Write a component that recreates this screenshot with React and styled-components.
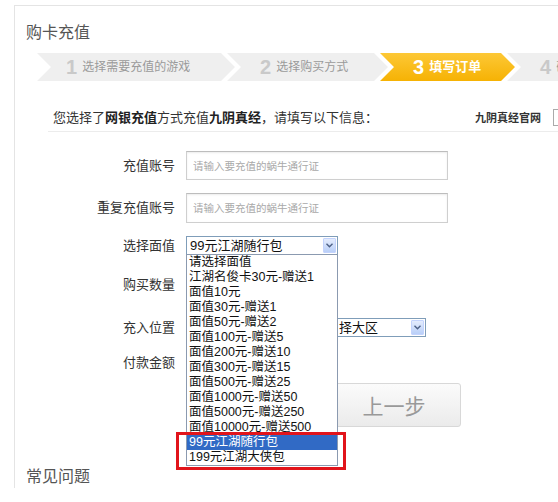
import React from "react";
import styled, { createGlobalStyle } from "styled-components";

const GlobalStyle = createGlobalStyle`
  html, body {
    margin: 0;
    padding: 0;
    background: #fff;
    overflow: hidden;
  }
  body {
    font-family: "Liberation Sans", "Noto Sans CJK SC", sans-serif;
    color: #333;
  }
`;

const steps = [
    { num: 1, text: "选择需要充值的游戏", w: 198 },
    { num: 2, text: "选择购买方式", w: 161 },
    { num: 3, text: "填写订单", w: 135, active: true },
    { num: 4, text: "确认支付", w: 120 },
];

const faceValues = [
    "请选择面值",
    "江湖名俊卡30元-赠送1",
    "面值10元",
    "面值30元-赠送1",
    "面值50元-赠送2",
    "面值100元-赠送5",
    "面值200元-赠送10",
    "面值300元-赠送15",
    "面值500元-赠送25",
    "面值1000元-赠送50",
    "面值5000元-赠送250",
    "面值10000元-赠送500",
    "99元江湖随行包",
    "199元江湖大侠包",
];

const selectedIndex = 12;

const ArrowIcon = () => (
    <svg width="7" height="5" viewBox="0 0 7 5">
        <path d="M0.5 0.8 L3.5 3.8 L6.5 0.8" fill="none" stroke="#4d6185" strokeWidth="1.4" />
    </svg>
);

const App = () => {
    return (
        <Page>
            <GlobalStyle />
            <Card>
                <Title>购卡充值</Title>

                <StepBar>
                    {steps.map((step, index) => (
                        <Step key={step.num} $w={step.w} $active={step.active} $first={index === 0}>
                            <StepNum $active={step.active}>{step.num}</StepNum>
                            <StepText $active={step.active}>{step.text}</StepText>
                        </Step>
                    ))}
                </StepBar>

                <InfoBar>
                    <InfoLead>
                        您选择了<b>网银充值</b>方式充值<b>九阴真经</b>，请填写以下信息：
                    </InfoLead>
                    <SiteName>九阴真经官网</SiteName>
                    <SiteBox />
                </InfoBar>

                <Row $mt={19} $h={29}>
                    <Label>充值账号</Label>
                    <TextInput placeholder="请输入要充值的蜗牛通行证" />
                </Row>
                <Row $mt={13} $h={30}>
                    <Label>重复充值账号</Label>
                    <TextInput placeholder="请输入要充值的蜗牛通行证" />
                </Row>
                <Row $mt={13} $h={19}>
                    <Label>选择面值</Label>
                    <SelectBox $w={152}>
                        <SelectText>99元江湖随行包</SelectText>
                        <ArrowBtn><ArrowIcon /></ArrowBtn>
                        <OptionList>
                            {faceValues.map((item, index) => (
                                <OptionItem key={item} $selected={index === selectedIndex}>{item}</OptionItem>
                            ))}
                            <Highlight />
                        </OptionList>
                    </SelectBox>
                </Row>
                <Row $mt={20} $h={20}>
                    <Label>购买数量</Label>
                </Row>
                <Row $mt={23} $h={19}>
                    <Label>充入位置</Label>
                    <SelectGroup>
                        {/* first select sits fully under the open list */}
                        <SelectBox $w={118}>
                            <SelectText />
                            <ArrowBtn><ArrowIcon /></ArrowBtn>
                        </SelectBox>
                        <SelectBox $w={117}>
                            <SelectText $indent={26}>择大区</SelectText>
                            <ArrowBtn><ArrowIcon /></ArrowBtn>
                        </SelectBox>
                    </SelectGroup>
                </Row>
                <Row $mt={16} $h={20}>
                    <Label>付款金额</Label>
                </Row>
                <ButtonRow>
                    <PrevButton type="button">上一步</PrevButton>
                </ButtonRow>

                <SubTitle>常见问题</SubTitle>
            </Card>
        </Page>
    );
};

const Page = styled.div`
width: 558px;
height: 502px;
overflow: hidden;
`;

const Card = styled.div`
box-sizing: border-box;
margin: 5px 0 0 14px;
width: 620px;
height: 483px;
padding-left: 11px;
border-top: 1px solid #e4e4e4;
border-left: 1px solid #e4e4e4;
`;

const Title = styled.h2`
margin: 17px 0 0;
font-size: 16px;
line-height: 20px;
font-weight: normal;
color: #555;
`;

const StepBar = styled.div`
display: flex;
margin: 10px 0 0 11px;
height: 28px;
white-space: nowrap;
`;

const Step = styled.div`
box-sizing: border-box;
flex: none;
display: flex;
align-items: center;
gap: 5px;
width: ${(p) => p.$w}px;
height: 28px;
margin-left: ${(p) => (p.$first ? 0 : -8)}px;
padding-left: ${(p) => (p.$first ? 29 : 33)}px;
background: ${(p) => (p.$active ? "linear-gradient(#fdc836, #f6b204)" : "#efefef")};
clip-path: polygon(0 0, calc(100% - 14px) 0, 100% 50%, calc(100% - 14px) 100%, 0 100%, 14px 50%);
`;

const StepNum = styled.span`
font-size: 20px;
line-height: 28px;
font-weight: bold;
color: ${(p) => (p.$active ? "#fff" : "#c9c9c9")};
`;

const StepText = styled.span`
font-size: ${(p) => (p.$active ? 13 : 12)}px;
line-height: 28px;
font-weight: ${(p) => (p.$active ? "bold" : "normal")};
color: ${(p) => (p.$active ? "#fff" : "#9a9a9a")};
`;

const InfoBar = styled.div`
display: flex;
align-items: flex-start;
height: 23px;
margin: 27px 0 0 22px;
padding-left: 5px;
border-bottom: 1px solid #ececec;
font-size: 13px;
line-height: 20px;
white-space: nowrap;
b {
    color: #222;
}
`;

const InfoLead = styled.div`
flex: 0 0 422px;
color: #333;
`;

const SiteName = styled.div`
font-size: 11px;
font-weight: bold;
color: #333;
`;

const SiteBox = styled.div`
box-sizing: border-box;
margin: 1px 0 0 12px;
width: 40px;
height: 17px;
border: 1px solid #aaa;
`;

const Row = styled.div`
display: flex;
align-items: center;
margin-top: ${(p) => p.$mt}px;
height: ${(p) => p.$h}px;
`;

const Label = styled.div`
flex: 0 0 149px;
margin-right: 11px;
text-align: right;
font-size: 13px;
line-height: 20px;
color: #333;
`;

const TextInput = styled.input`
box-sizing: border-box;
width: 262px;
height: 100%;
padding: 0 6px;
border: 1px solid #cfcfcf;
border-top-color: #bdbdbd;
box-shadow: inset 0 1px 2px rgba(0, 0, 0, 0.08);
font-family: inherit;
font-size: 10.5px;
outline: none;
&::placeholder {
    color: #a9a9a9;
}
`;

const SelectGroup = styled.div`
display: flex;
gap: 5px;
`;

const SelectBox = styled.div`
box-sizing: border-box;
position: relative;
display: flex;
align-items: center;
width: ${(p) => p.$w}px;
height: 19px;
padding-left: 3px;
border: 1px solid #7f9db9;
background: #fff;
`;

const SelectText = styled.span`
flex: 1;
padding-left: ${(p) => p.$indent || 0}px;
font-size: 13px;
line-height: 17px;
color: #111;
white-space: nowrap;
overflow: hidden;
`;

const ArrowBtn = styled.span`
box-sizing: border-box;
display: flex;
align-items: center;
justify-content: center;
flex: none;
width: 13px;
height: 15px;
margin-right: 1px;
border: 1px solid #c3d3fd;
border-radius: 1px;
background: linear-gradient(#e4ecfd, #b9cff8);
`;

const OptionList = styled.div`
position: absolute;
z-index: 5;
top: 100%;
left: -1px;
width: 152px;
box-sizing: border-box;
border: 1px solid #8b9ab0;
background: #fff;
`;

const OptionItem = styled.div`
height: 15px;
padding-left: 2px;
font-size: 12.5px;
line-height: 15px;
white-space: nowrap;
overflow: hidden;
color: ${(p) => (p.$selected ? "#fff" : "#111")};
background: ${(p) => (p.$selected ? "#316ac5" : "transparent")};
`;

const Highlight = styled.div`
position: absolute;
top: 177px;
left: -11px;
box-sizing: border-box;
width: 170px;
height: 38px;
border: 3px solid #e1141b;
`;

const ButtonRow = styled.div`
margin-top: 10px;
padding-left: 301px;
`;

const PrevButton = styled.button`
width: 134px;
height: 44px;
border: 1px solid #d8d8d8;
border-radius: 3px;
background: linear-gradient(#fbfbfb, #ebebeb);
font-family: inherit;
font-size: 21px;
color: #999;
cursor: pointer;
`;

const SubTitle = styled.h3`
margin: 40px 0 0;
font-size: 16px;
line-height: 20px;
font-weight: normal;
color: #555;
`;

export default App;
